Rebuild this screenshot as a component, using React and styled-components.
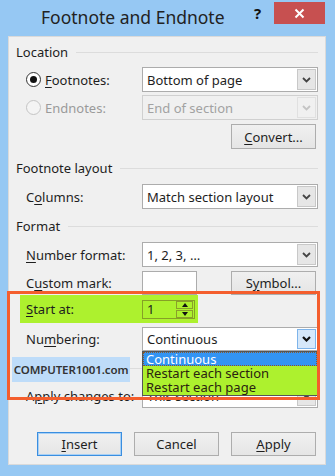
import React from 'react';
import styled, { createGlobalStyle } from 'styled-components';

const Global = createGlobalStyle`
  html, body { margin: 0; padding: 0; background: #96c8f3; }
  body { font-family: "Noto Sans", "Open Sans", sans-serif; }
  * { box-sizing: border-box; }
`;

const Window = styled.div`
  position: relative;
  width: 335px;
  height: 476px;
  background: #96c8f3;
  display: flex;
  flex-direction: column;
  overflow: hidden;
`;

const TitleBar = styled.div`
  height: 36px;
  flex-shrink: 0;
  display: flex;
  align-items: flex-start;
`;

const Title = styled.div`
  flex: 1;
  margin: 5px 0 0 41px;
  font-size: 17.5px;
  line-height: 24px;
  color: #222;
`;

const HelpBtn = styled.div`
  margin-top: 4px;
  width: 10px;
  font-size: 15px;
  font-weight: 700;
  line-height: 18px;
  color: #111;
`;

const CloseBtn = styled.div`
  margin: 2px 10px 0 10px;
  width: 51px;
  height: 22px;
  background: #c75050;
  display: flex;
  align-items: center;
  justify-content: center;
`;

const Panel = styled.div`
  flex: 1;
  margin: 0 9px 11px 8px;
  border: 1px solid #dadada;
  background: #f0f0f0;
  padding: 0 7px;
  display: flex;
  flex-direction: column;
  font-size: 13px;
  color: #1e1e1e;
`;

const SectionHeader = styled.div`
  display: flex;
  align-items: center;
  height: 16px;
  line-height: 16px;
  margin-top: ${p => p.$mt}px;
  &::after {
    content: "";
    flex: 1;
    height: 1px;
    margin-left: 8px;
    background: #dcdcdc;
  }
`;

const Row = styled.div`
  display: flex;
  align-items: center;
  height: ${p => p.$h || 25}px;
  margin-top: ${p => p.$mt}px;
  padding-left: 10px;
`;

const GreenRow = styled.div`
  display: flex;
  align-items: center;
  align-self: flex-start;
  height: 28px;
  margin-left: 4px;
  padding: 0 3px 0 6px;
  background: #adf12e;
`;

const Label = styled.div`
  width: 116px;
  flex-shrink: 0;
  display: flex;
  align-items: center;
  color: ${p => (p.$disabled ? '#9a9a9a' : '#1e1e1e')};
`;

const Key = styled.span`
  text-decoration: underline;
  text-underline-offset: 2px;
`;

const Radio = styled.span`
  width: 15px;
  height: 15px;
  border-radius: 50%;
  border: 1px solid ${p => (p.$disabled ? '#c4c4c4' : '#333')};
  background: ${p => (p.$disabled ? '#f4f4f4' : '#fff')};
  margin-right: 4px;
  flex-shrink: 0;
  display: flex;
  align-items: center;
  justify-content: center;
  &::after {
    content: "";
    display: ${p => (p.$checked ? 'block' : 'none')};
    width: 7px;
    height: 7px;
    border-radius: 50%;
    background: #111;
  }
`;

const RadioLabel = styled(Label)`
  width: 97px;
`;

const Select = styled.div`
  width: 176px;
  height: ${p => p.$h || 25}px;
  display: flex;
  align-items: stretch;
  border: 1px solid ${p => (p.$disabled ? '#d0d0d0' : '#acacac')};
  background: ${p => (p.$disabled ? '#f0f0f0' : '#fff')};
  color: ${p => (p.$disabled ? '#a2a2a2' : '#1e1e1e')};
`;

const SelectText = styled.div`
  flex: 1;
  padding-left: 4px;
  display: flex;
  align-items: center;
`;

const SelectBtn = styled.div`
  width: 19px;
  margin: 1px;
  display: flex;
  align-items: center;
  justify-content: center;
  border: 1px solid ${p => (p.$active ? '#7eb4ea' : p.$disabled ? '#e0e0e0' : '#c8c8c8')};
  background: ${p => (p.$active ? '#d6e8fa' : p.$disabled ? '#f0f0f0' : '#e6e6e6')};
`;

const Chevron = ({ color = '#444', w = 1.8 }) => (
  <svg width="9" height="6" viewBox="0 0 9 6">
    <path d="M1 1 L4.5 4.5 L8 1" fill="none" stroke={color} strokeWidth={w} />
  </svg>
);

const Button = styled.div`
  width: 85px;
  height: ${p => p.$h || 24}px;
  display: flex;
  align-items: center;
  justify-content: center;
  background: linear-gradient(#f0f0f0, #e5e5e5);
  border: 1px solid ${p => (p.$focus ? '#3a8ee0' : '#adadad')};
  box-shadow: ${p => (p.$focus ? 'inset 0 0 0 1px #a8d0f5' : 'none')};
  color: #1e1e1e;
`;

const RightRow = styled.div`
  display: flex;
  justify-content: flex-end;
  gap: 12px;
  margin-top: ${p => p.$mt}px;
  padding-right: 2px;
`;

const TextBox = styled.div`
  width: 55px;
  height: 24px;
  border: 1px solid #acacac;
  background: #fff;
`;

const ControlsSpacer = styled.div`
  flex: 1;
`;

const EndGap = styled.div`
  flex: 0 0 2px;
`;

const Spinner = styled.div`
  width: 53px;
  height: 19px;
  border: 1px solid #86a026;
  display: flex;
  align-items: center;
  padding-left: 4px;
`;

const SpinValue = styled.div`
  flex: 1;
`;

const SpinBtns = styled.div`
  width: 17px;
  height: 17px;
  margin-right: 1px;
  display: flex;
  flex-direction: column;
  gap: 1px;
`;

const SpinBtn = styled.div`
  flex: 1;
  border: 1px solid #8aa02a;
  display: flex;
  align-items: center;
  justify-content: center;
`;

const Arrow = styled.span`
  width: 0;
  height: 0;
  border-left: 3.5px solid transparent;
  border-right: 3.5px solid transparent;
  ${p => (p.$up ? 'border-bottom: 4px solid #111;' : 'border-top: 4px solid #111;')}
`;

const OrangeBox = styled.div`
  position: absolute;
  left: 7px;
  top: 291px;
  width: 313px;
  height: 109px;
  border: 3px solid #f45e2d;
  pointer-events: none;
`;

const DropList = styled.div`
  position: absolute;
  left: 142px;
  top: 351px;
  width: 176px;
  height: 45px;
  border: 1px solid #555;
  background: #adf12e;
  font-size: 13px;
  line-height: 14px;
  display: flex;
  flex-direction: column;
`;

const DropItem = styled.div`
  height: 14px;
  padding-left: 3px;
  color: ${p => (p.$sel ? '#fff' : '#2a2410')};
  background: ${p => (p.$sel ? '#3394f2' : 'transparent')};
  outline: ${p => (p.$sel ? '1px dotted #8a5a2a' : 'none')};
  outline-offset: -1px;
  white-space: nowrap;
`;

const Watermark = styled.div`
  position: absolute;
  left: 12px;
  top: 357px;
  width: 118px;
  height: 25px;
  background: #bedcf9;
  display: flex;
  align-items: center;
  justify-content: center;
  font-size: 11.5px;
  font-weight: 600;
  color: #333;
  letter-spacing: -0.1px;
`;

export default function App() {
  return (
    <>
      <Global />
      <Window>
        <TitleBar>
          <Title>Footnote and Endnote</Title>
          <HelpBtn>?</HelpBtn>
          <CloseBtn>
            <svg width="11" height="11" viewBox="0 0 11 11">
              <path d="M1.5 1.5 L9.5 9.5 M9.5 1.5 L1.5 9.5" stroke="#fff" strokeWidth="2" />
            </svg>
          </CloseBtn>
        </TitleBar>
        <Panel>
          <SectionHeader $mt={7}>Location</SectionHeader>
          <Row $mt={7}>
            <Radio $checked />
            <RadioLabel><Key>F</Key>ootnotes:</RadioLabel>
            <Select>
              <SelectText>Bottom of page</SelectText>
              <SelectBtn><Chevron /></SelectBtn>
            </Select>
          </Row>
          <Row $mt={3}>
            <Radio $disabled />
            <RadioLabel $disabled>Endnotes:</RadioLabel>
            <Select $disabled>
              <SelectText>End of section</SelectText>
              <SelectBtn $disabled><Chevron color="#c4c4c4" /></SelectBtn>
            </Select>
          </Row>
          <RightRow $mt={4}>
            <Button $h={25}><Key>C</Key>onvert...</Button>
          </RightRow>
          <SectionHeader $mt={11}>Footnote layout</SectionHeader>
          <Row $mt={8}>
            <Label>C<Key>o</Key>lumns:</Label>
            <Select>
              <SelectText>Match section layout</SelectText>
              <SelectBtn><Chevron /></SelectBtn>
            </Select>
          </Row>
          <SectionHeader $mt={9}>Format</SectionHeader>
          <Row $mt={8}>
            <Label><Key>N</Key>umber format:</Label>
            <Select>
              <SelectText>1, 2, 3, …</SelectText>
              <SelectBtn><Chevron /></SelectBtn>
            </Select>
          </Row>
          <Row $mt={4} $h={24}>
            <Label>C<Key>u</Key>stom mark:</Label>
            <TextBox />
            <ControlsSpacer />
            <Button>S<Key>y</Key>mbol...</Button>
            <EndGap />
          </Row>
          <GreenRow>
            <Label><Key>S</Key>tart at:</Label>
            <Spinner>
              <SpinValue>1</SpinValue>
              <SpinBtns>
                <SpinBtn><Arrow $up /></SpinBtn>
                <SpinBtn><Arrow /></SpinBtn>
              </SpinBtns>
            </Spinner>
          </GreenRow>
          <Row $mt={4} $h={24}>
            <Label>Nu<Key>m</Key>bering:</Label>
            <Select $h={24}>
              <SelectText>Continuous</SelectText>
              <SelectBtn $active><Chevron color="#111" w={2.2} /></SelectBtn>
            </Select>
          </Row>
          <SectionHeader $mt={9}>Apply changes</SectionHeader>
          <Row $mt={7}>
            <Label>A<Key>p</Key>ply changes to:</Label>
            <Select>
              <SelectText>This section</SelectText>
              <SelectBtn><Chevron /></SelectBtn>
            </Select>
          </Row>
          <RightRow $mt={24}>
            <Button $focus><Key>I</Key>nsert</Button>
            <Button>Cancel</Button>
            <Button><Key>A</Key>pply</Button>
          </RightRow>
        </Panel>
        <DropList>
          <DropItem $sel>Continuous</DropItem>
          <DropItem>Restart each section</DropItem>
          <DropItem>Restart each page</DropItem>
        </DropList>
        <OrangeBox />
        <Watermark>COMPUTER1001.com</Watermark>
      </Window>
    </>
  );
}
